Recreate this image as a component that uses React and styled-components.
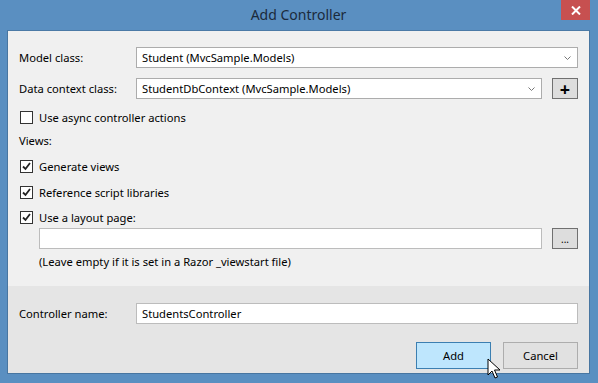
import React from 'react';
import styled, {createGlobalStyle} from 'styled-components';

const Global = createGlobalStyle`
  html, body { margin: 0; padding: 0; }
  body { font-family: "Noto Sans", "Open Sans", sans-serif; overflow: hidden; }
`;

const Frame = styled.div`
  position: relative;
  width: 598px;
  height: 383px;
  background: #5a8fc1;
  display: flex;
  flex-direction: column;
  box-sizing: border-box;
  padding: 0 8px 9px 7px;
  color: #000;
`;

const TitleBar = styled.div`
  height: 30px;
  flex: none;
  position: relative;
  display: flex;
  align-items: center;
  justify-content: center;
  font-size: 14px;
  color: #1b2a3b;
  padding-bottom: 1px;
  box-sizing: border-box;
`;

const CloseBtn = styled.div`
  position: absolute;
  right: 0;
  top: 0;
  width: 29px;
  height: 20px;
  background: #c75050;
  display: flex;
  align-items: center;
  justify-content: center;
`;

const Client = styled.div`
  flex: 1;
  display: flex;
  flex-direction: column;
  border: 1px solid #4876a1;
  border-top-color: #4b7aa6;
  background: #f0f0f0;
  font-size: 11.2px;
`;

const Main = styled.div`
  flex: 1;
  padding: 16px 11px 0 11px;
  display: flex;
  flex-direction: column;
`;

const Footer = styled.div`
  height: 87px;
  background: #e5e5e5;
  padding: 16px 11px 0 11px;
  box-sizing: border-box;
  display: flex;
  flex-direction: column;
`;

const FieldRow = styled.div`
  display: flex;
  align-items: center;
  height: 21px;
  margin-top: ${p => p.$top || 0}px;
  margin-bottom: ${p => p.$gap || 0}px;
`;

const Label = styled.div`
  width: 117px;
  flex: none;
`;

const Box = styled.div`
  flex: 1;
  height: 21px;
  box-sizing: border-box;
  background: #fff;
  border: 1px solid ${p => p.$light ? '#bcbcbc' : '#acacac'};
  display: flex;
  align-items: center;
  padding-left: 5px;
  position: relative;
  margin-left: ${p => p.$indent || 0}px;
`;

const Chevron = styled.svg`
  position: absolute;
  right: 6px;
  top: 8px;
`;

const SmallBtn = styled.div`
  width: 26px;
  height: 21px;
  flex: none;
  margin-left: 10px;
  box-sizing: border-box;
  background: #dddddd;
  border: 1px solid #707070;
  display: flex;
  align-items: center;
  justify-content: center;
  font-size: ${p => p.$size || 12}px;
  font-weight: ${p => p.$bold ? 700 : 400};
`;

const CheckRow = styled.div`
  display: flex;
  align-items: center;
  height: 16px;
  margin-top: ${p => p.$top || 0}px;
  gap: 6px;
  padding-left: 1px;
`;

const CheckBox = styled.div`
  width: 13px;
  height: 13px;
  box-sizing: border-box;
  border: 1px solid #333;
  background: #fff;
  display: flex;
  align-items: center;
  justify-content: center;
`;

const Plain = styled.div`
  margin-top: ${p => p.$top || 0}px;
  padding-left: ${p => p.$indent || 0}px;
  height: 16px;
  line-height: 16px;
`;

const Buttons = styled.div`
  display: flex;
  justify-content: flex-end;
  gap: 12px;
  margin-top: 18px;
`;

const Button = styled.div`
  width: 75px;
  height: 27px;
  box-sizing: border-box;
  display: flex;
  align-items: center;
  justify-content: center;
  background: ${p => p.$hot ? '#bee6fd' : '#e1e1e1'};
  border: 1px solid ${p => p.$hot ? '#3c7fb1' : '#adadad'};
`;

const Cursor = styled.svg`
  position: absolute;
  left: 487px;
  top: 358px;
`;

function Check({checked}) {
  return (
    <CheckBox>
      {checked && (
        <svg width="9" height="9" viewBox="0 0 9 9">
          <path d="M1 4.5 L3.5 7 L8 1" fill="none" stroke="#222" strokeWidth="1.8" />
        </svg>
      )}
    </CheckBox>
  );
}

function Combo({text}) {
  return (
    <Box>
      {text}
      <Chevron width="7" height="5" viewBox="0 0 7 5">
        <path d="M0.5 0.5 L3.5 3.5 L6.5 0.5" fill="none" stroke="#777" strokeWidth="1" />
      </Chevron>
    </Box>
  );
}

export default function App() {
  return (
    <Frame>
      <Global />
      <TitleBar>
        Add Controller
        <CloseBtn>
          <svg width="10" height="9" viewBox="0 0 10 9">
            <path d="M1 0.5 L9 8.5 M9 0.5 L1 8.5" stroke="#fff" strokeWidth="2" />
          </svg>
        </CloseBtn>
      </TitleBar>
      <Client>
        <Main>
          <FieldRow $gap={10}>
            <Label>Model class:</Label>
            <Combo text="Student (MvcSample.Models)" />
          </FieldRow>
          <FieldRow>
            <Label>Data context class:</Label>
            <Combo text="StudentDbContext (MvcSample.Models)" />
            <SmallBtn $size={18} $bold>+</SmallBtn>
          </FieldRow>
          <CheckRow $top={10}>
            <Check />
            Use async controller actions
          </CheckRow>
          <Plain $top={8}>Views:</Plain>
          <CheckRow $top={9}>
            <Check checked />
            Generate views
          </CheckRow>
          <CheckRow $top={10}>
            <Check checked />
            Reference script libraries
          </CheckRow>
          <CheckRow $top={9}>
            <Check checked />
            Use a layout page:
          </CheckRow>
          <FieldRow $top={3}>
            <Box $indent={20} $light />
            <SmallBtn $size={10}>...</SmallBtn>
          </FieldRow>
          <Plain $top={5} $indent={20}>(Leave empty if it is set in a Razor _viewstart file)</Plain>
        </Main>
        <Footer>
          <FieldRow $top={1}>
            <Label>Controller name:</Label>
            <Box $light>StudentsController</Box>
          </FieldRow>
          <Buttons>
            <Button $hot>Add</Button>
            <Button>Cancel</Button>
          </Buttons>
        </Footer>
      </Client>
      <Cursor width="14" height="22" viewBox="0 0 14 22">
        <path d="M1 1 L1 17 L5 13 L8 20 L10.5 19 L7.5 12 L13 12 Z" fill="#fff" stroke="#000" strokeWidth="1" />
      </Cursor>
    </Frame>
  );
}
